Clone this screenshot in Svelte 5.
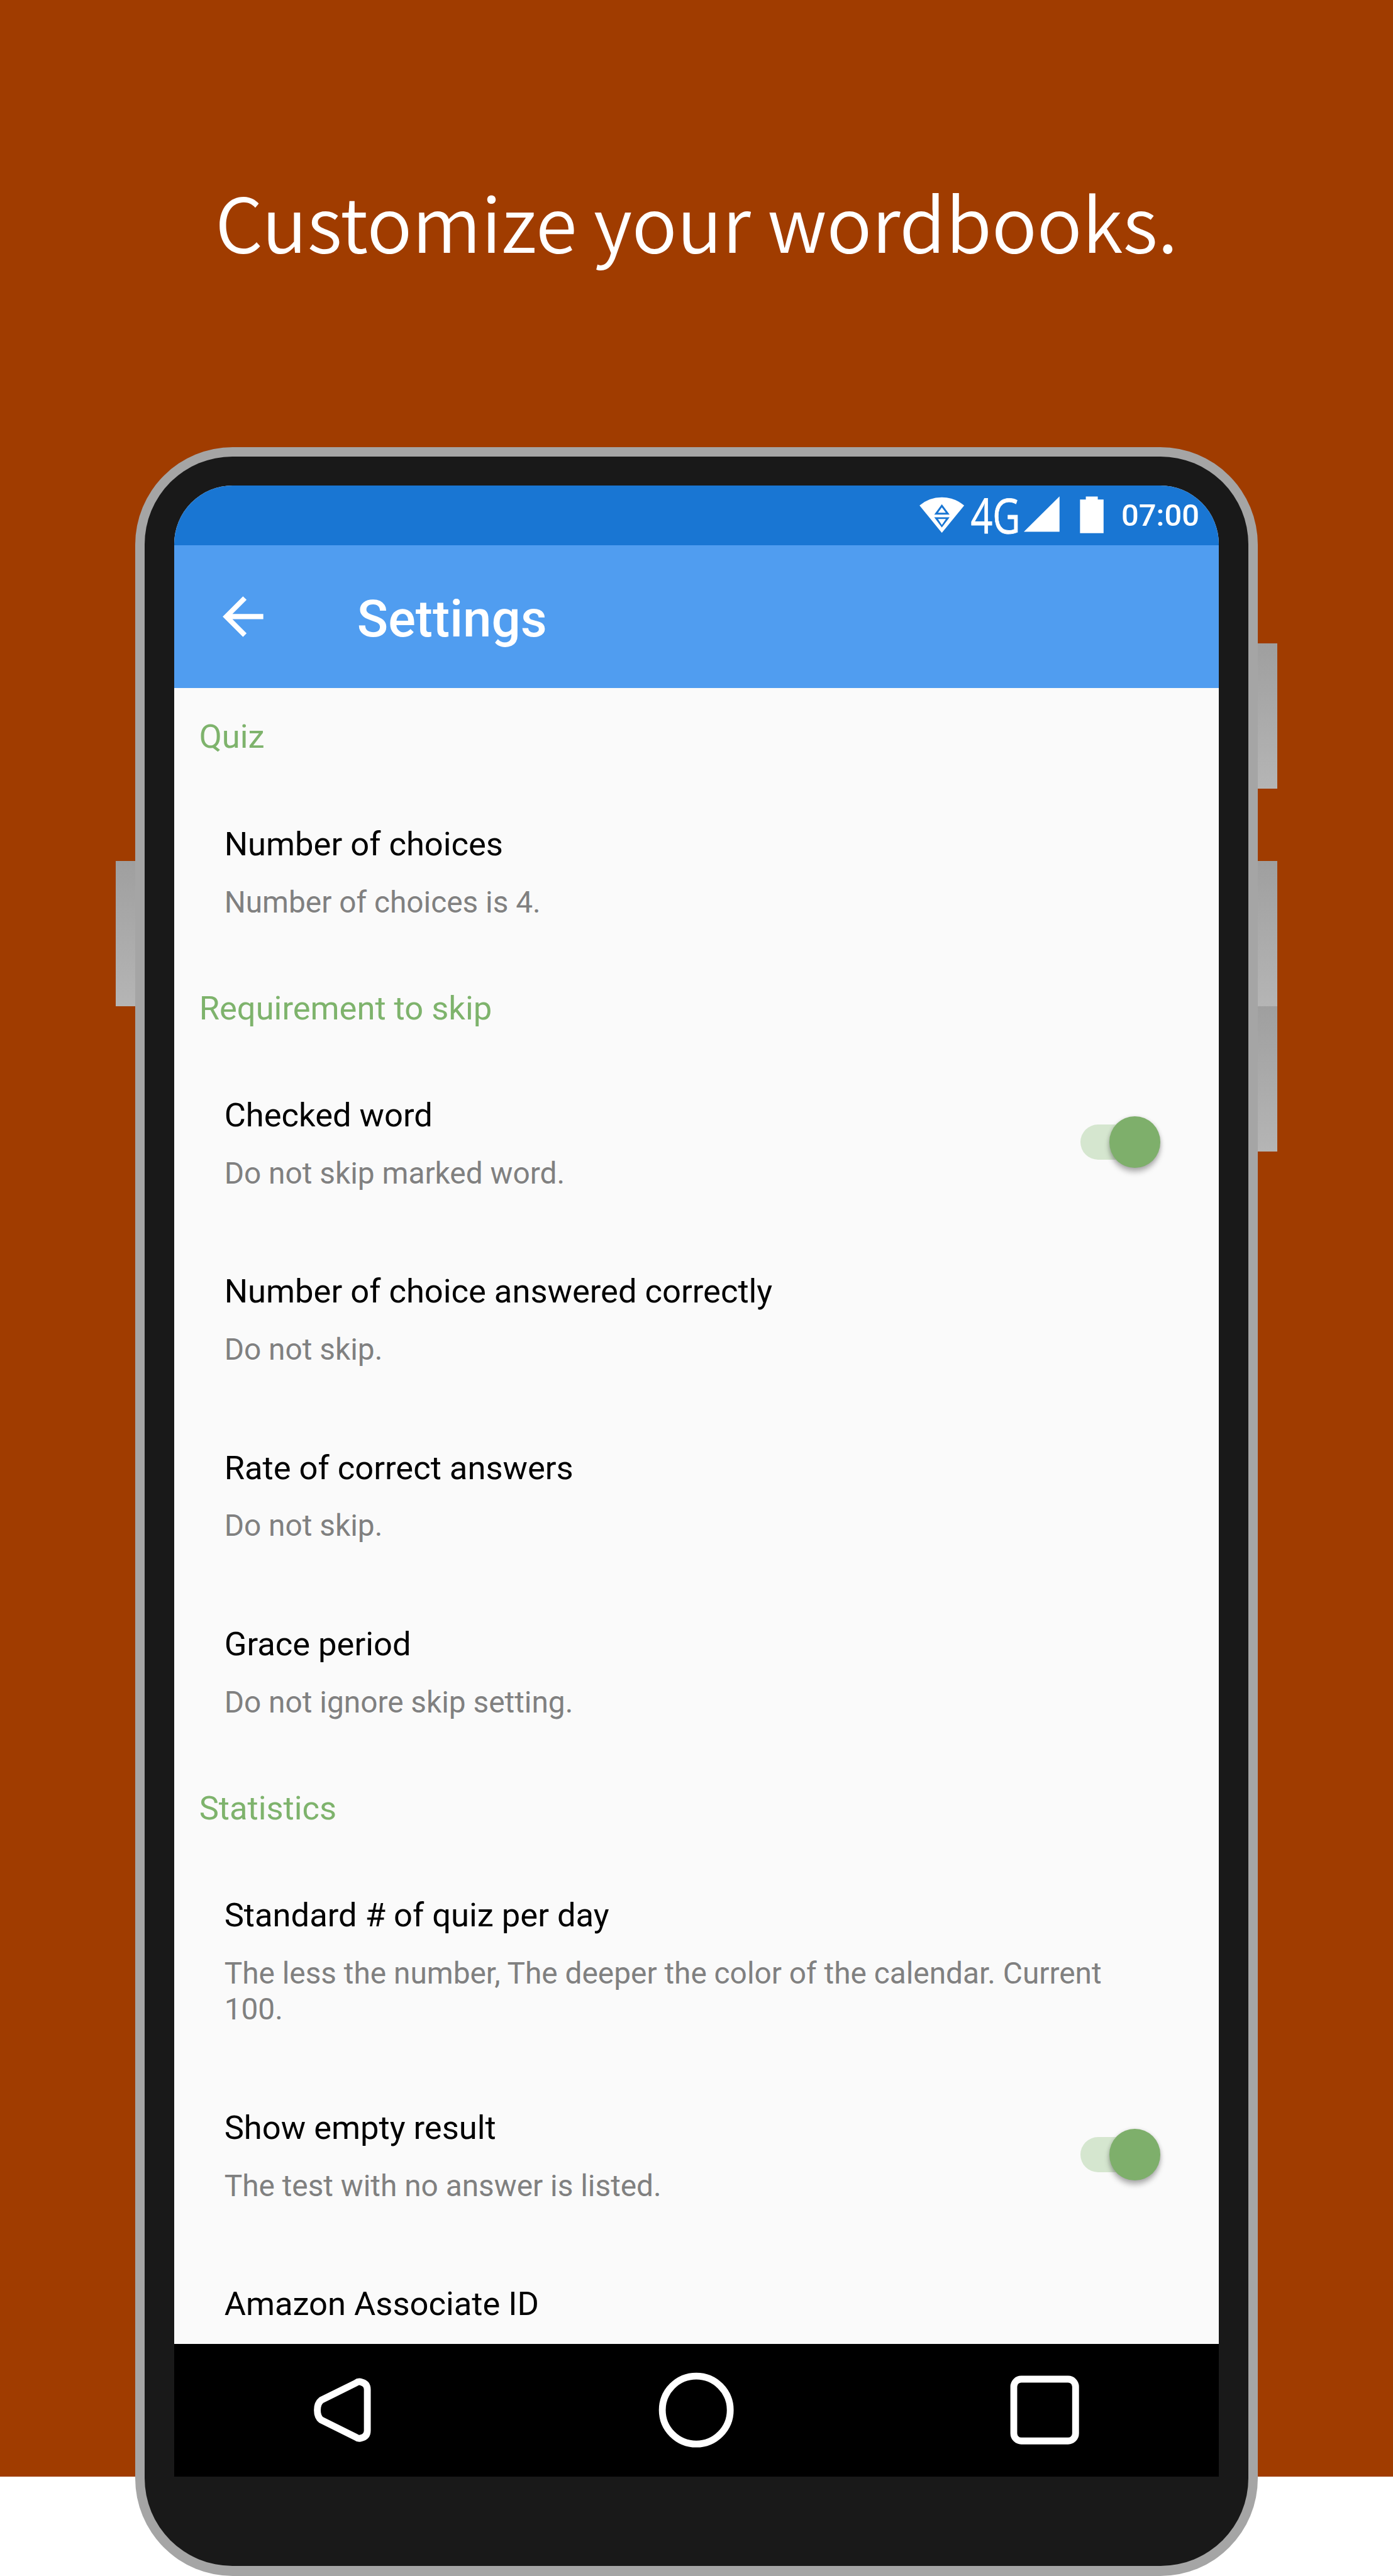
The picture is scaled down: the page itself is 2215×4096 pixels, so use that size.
<script>
  const sections = [
    {
      name: 'Quiz',
      rows: [{ title: 'Number of choices', summary: 'Number of choices is 4.' }],
    },
    {
      name: 'Requirement to skip',
      rows: [
        { title: 'Checked word', summary: 'Do not skip marked word.', on: true },
        { title: 'Number of choice answered correctly', summary: 'Do not skip.' },
        { title: 'Rate of correct answers', summary: 'Do not skip.' },
        { title: 'Grace period', summary: 'Do not ignore skip setting.' },
      ],
    },
    {
      name: 'Statistics',
      rows: [
        {
          title: 'Standard # of quiz per day',
          summary: 'The less the number, The deeper the color of the calendar. Current 100.',
        },
        { title: 'Show empty result', summary: 'The test with no answer is listed.', on: true },
        { title: 'Amazon Associate ID', summary: '' },
      ],
    },
  ];
</script>

<main class="page">
  <h1 class="headline">Customize your wordbooks.</h1>

  <div class="phone">
    <span class="key power"></span>
    <span class="key volume-up"></span>
    <span class="key volume-down"></span>
    <span class="key assist"></span>

    <div class="bezel">
      <div class="screen">
        <div class="status">
          <svg class="signals" viewBox="2690 1445 550 130" fill="#fff">
            <!-- wifi with data arrows -->
            <path d="M2759.3 1559.5L2694 1479.5Q2722 1455.7 2759.3 1455.7T2824.7 1479.5Z" />
            <path d="M2759.3 1476L2782 1506H2737Z M2737 1514H2782L2759.3 1544Z" fill="#1976d3" />
            <path d="M2759.3 1485L2771 1500.5H2748Z M2748 1519H2771L2759.3 1536.5Z" />
            <text x="2844" y="1561" font-size="142" textLength="145.500" lengthAdjust="spacingAndGlyphs">4G</text>
            <!-- cell signal -->
            <path d="M3104 1453V1556.5H2999.5Z" />
            <!-- battery -->
            <path d="M3164 1462H3181V1453.5H3216V1462H3233V1560.5H3164Z" />
          </svg>
          <span class="clock">07:00</span>
        </div>

        <header class="appbar">
          <svg class="back" viewBox="0 0 24 24" fill="#fff">
            <path d="M20 11H7.83l5.59-5.59L12 4l-8 8 8 8 1.41-1.41L7.83 13H20v-2z" />
          </svg>
          <h2>Settings</h2>
        </header>

        <div class="list">
          {#each sections as section}
            <h3 class="category">{section.name}</h3>
            {#each section.rows as row}
              <div class="row">
                <div class="text">
                  <div class="title">{row.title}</div>
                  <div class="summary">{row.summary}</div>
                </div>
                {#if row.on}
                  <div class="switch"><span class="thumb"></span></div>
                {/if}
              </div>
            {/each}
          {/each}
        </div>

        <nav class="navbar">
          <svg viewBox="-120 -120 240 240">
            <path d="M23 -79L-78 -29Q-89.5 -20 -89.500 0T-78 29L23 79Q31 85 39 82Q57 78 57 60V-60Q57 -78 39 -82Q31 -85 23 -79Z" />
          </svg>
          <svg viewBox="-120 -120 240 240"><circle r="99.5" /></svg>
          <svg viewBox="-120 -120 240 240">
            <rect x="-90.5" y="-90.5" width="181" height="181" rx="22" />
          </svg>
        </nav>
      </div>
    </div>
  </div>
</main>

<style>
  :global(body) {
    background: #fff;
  }
  .page {
    width: 2215px;
    height: 4096px;
    overflow: hidden;
    display: flex;
    flex-direction: column;
    align-items: center;
    background: linear-gradient(#a03c00 0 3938px, #fff 3938px);
    font-family: Roboto, sans-serif;
  }
  h1,
  h2,
  h3 {
    margin: 0;
    font-weight: 400;
  }
  .headline {
    box-sizing: border-box;
    flex: none;
    height: 710.6px;
    padding-top: 262.7px;
    font: 350 119.4px/174px 'Noto Sans CJK JP DemiLight', 'Noto Sans CJK JP', sans-serif;
    color: #fff;
    white-space: nowrap;
  }
  .phone {
    position: relative;
    box-sizing: border-box;
    flex: none;
    width: 1785.5px;
    height: 3385.4px;
    padding: 15.5px;
    border-radius: 155px;
    background: #a5a5a5;
  }
  .bezel {
    box-sizing: border-box;
    height: 100%;
    padding: 46.4px 46.4px 0;
    border-radius: 139.5px;
    background: #191919;
  }
  .key {
    position: absolute;
    width: 31px;
    height: 231.3px;
    background: linear-gradient(#9f9f9f, #b5b5b5);
  }
  .power {
    left: 100%;
    top: 312px;
  }
  .volume-up {
    left: 100%;
    top: 658.6px;
  }
  .volume-down {
    left: 100%;
    top: 889.5px;
  }
  .assist {
    right: 100%;
    top: 658.6px;
  }
  .screen {
    display: flex;
    flex-direction: column;
    height: 3165.5px;
    overflow: hidden;
    border-radius: 93px 93px 0 0;
    background: #fafafa;
  }
  .status {
    flex: none;
    display: flex;
    align-items: center;
    justify-content: flex-end;
    gap: 24.4px;
    height: 95px;
    padding-right: 31.3px;
    background: #1976d3;
    color: #fff;
  }
  .signals {
    width: 298.6px;
    height: 70.6px;
    overflow: visible;
    font-family: 'Open Sans', sans-serif;
  }
  .signals text {
    stroke: #fff;
    stroke-width: 1.5px;
  }
  .clock {
    font-size: 48.9px;
    font-weight: 500;
  }
  .appbar {
    flex: none;
    display: flex;
    align-items: center;
    height: 226.3px;
    padding-left: 61.3px;
    background: #509df0;
    color: #fff;
  }
  .back {
    width: 96.8px;
    height: 96.8px;
  }
  .appbar h2 {
    margin-left: 133px;
    padding-top: 7px;
    font-size: 81.6px;
    font-weight: 500;
  }
  .list {
    flex: 1;
    min-height: 0;
    overflow: hidden;
  }
  .category {
    height: 62px;
    padding: 46.6px 0 42.3px 40px;
    font-size: 52.5px;
    line-height: 62px;
    color: #7eb36c;
  }
  .row {
    display: flex;
    align-items: center;
    justify-content: space-between;
    padding: 0 93px 0 80px;
  }
  .text {
    width: 1420px;
    padding: 66.3px 0 60.8px;
  }
  .title {
    font-size: 52.5px;
    line-height: 62px;
    color: #000;
  }
  .summary {
    min-height: 57.5px;
    margin-top: 33.7px;
    font-size: 47.8px;
    line-height: 57.5px;
    color: #808080;
  }
  .switch {
    flex: none;
    display: flex;
    align-items: center;
    justify-content: flex-end;
    width: 127.4px;
    height: 55.8px;
    margin-left: -60px;
    border-radius: 28px;
    background: linear-gradient(90deg, #d5e6cf 0 85px, transparent 85px);
  }
  .thumb {
    flex: none;
    width: 81.6px;
    height: 81.6px;
    border-radius: 50%;
    background: #7eaf6b;
    box-shadow:
      0 7px 8px rgba(0, 0, 0, 0.26),
      0 1px 6px rgba(0, 0, 0, 0.14);
  }
  .navbar {
    flex: none;
    display: grid;
    grid-template-columns: repeat(3, 1fr);
    align-items: center;
    justify-items: center;
    height: 211.2px;
    background: #000;
  }
  .navbar svg {
    width: 130.3px;
    height: 130.3px;
    fill: none;
    stroke: #fff;
    stroke-width: 20;
    stroke-linejoin: round;
  }
</style>
